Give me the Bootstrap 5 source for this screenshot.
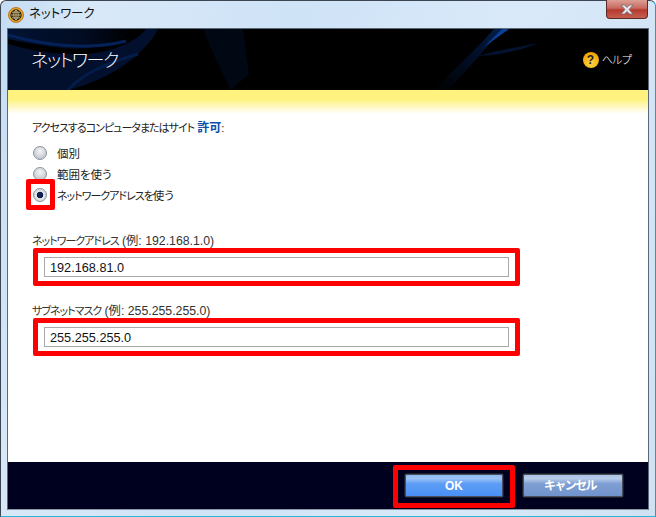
<!DOCTYPE html>
<html lang="ja">
<head>
<meta charset="utf-8">
<title>ネットワーク</title>
<link href="https://cdn.jsdelivr.net/npm/bootstrap@5.3.0/dist/css/bootstrap.min.css" rel="stylesheet">
<style>
html,body{margin:0;height:517px;overflow:hidden;background:#fff}
body{font-family:"Liberation Sans","Noto Sans CJK JP",sans-serif;font-size:11.5px;color:#222;font-feature-settings:"palt"}
.aero{height:517px;padding:0 6px 6px 6px;border:1px solid #3c4652;border-bottom-color:#2bb5d8;border-right-color:#1b9fd0;border-radius:6px 6px 0 0;background:linear-gradient(100deg,#c4dcf4 0,#d8e8f8 12%,#cfe3f7 40%,#d9e9f9 70%,#cfe2f3 100%)}
.tbar{height:27px;position:relative}
.globe{margin-left:1px;margin-right:5px}
.tbar-text{font-size:12.5px;color:#111;line-height:1;letter-spacing:-.1px}
.closex{width:42px;height:19px;margin-top:-1px;margin-right:1px;background:linear-gradient(#dba097 0,#c9695f 45%,#b53a2e 55%,#c65f50 100%);border:1px solid #5b2a26;border-top:0;border-radius:0 0 4px 4px}
.pane{border:1px solid #5c6875;border-bottom-color:#8a96a3;height:482px;background:#fff;position:relative}
.pane-head{height:61px;background:#000;position:relative;overflow:hidden;color:#fff}
.art{position:absolute;left:0;top:0}
.pane-title{position:relative;margin-left:23px;padding-top:3px;font-size:18px;font-weight:300;letter-spacing:-1.4px;line-height:1}
.helpbox{position:relative;margin-right:17px;gap:3px}
.help-txt{font-size:11px;font-weight:300;letter-spacing:-.7px;padding-top:1px}
.helpdot{width:16px;height:16px;border-radius:50%;background:radial-gradient(circle at 50% 70%,#ffd54a,#f0a400 75%,#c98300);color:#222;font-size:12px;font-weight:700;line-height:16px;text-align:center}
.pane-body{height:372px;padding:28px 24px 0;background:linear-gradient(#fff27e 0,#fff27e 9px,#fff 24px)}
.kn{font-size:11px;letter-spacing:-1px}
.lt{font-size:12.3px}
.line-txt{line-height:18px;padding-top:1px;height:18px}
.allow{color:#0b4fa8;font-weight:700;font-size:12px}
.radio-list{margin-top:6px;position:relative}
.radio-row{height:21px;padding-left:1px;min-height:0;margin:0}
.radio-row .form-check-input{appearance:none;float:none;width:14px;height:14px;margin:0 10px 0 0;flex:none;border:1px solid #8b939c;border-radius:50%;background:radial-gradient(circle at 50% 35%,#f4f5f7,#c3c8cf 75%);box-shadow:none}
.radio-row .form-check-input:checked{background:radial-gradient(circle,#14224f 0,#14224f 3px,#e6e8ec 3.6px,#c3c8cf 100%);border-color:#8b939c}
.radio-row .form-check-label{line-height:21px;padding-top:4px;color:#222;opacity:1}
.radio-mark{position:absolute;left:-6px;top:37px;width:29px;height:31px;border:5px solid #f00;border-radius:2px;pointer-events:none}
.field-label{display:block;margin:0;height:18px;padding-top:2px;line-height:18px;color:#333}
.first-label{margin-top:25px}
.next-label{margin-top:14px}
.red-wrap{width:487px;margin-left:1px;padding:4px 6px;border:5px solid #f00;border-radius:2px}
.red-wrap .form-control{height:20px;min-height:0;padding:1px 5px 0;border:1px solid #aaa;border-radius:0;font-size:12.7px;line-height:17px;color:#111;box-shadow:none}
.pane-foot{height:47px;background:#00001f;padding:11px 24px 0 0;gap:18px;position:relative}
.foot-btn{height:25px;padding:0;border:1px solid #1c1f2a;outline:1px solid #4a4e5c;outline-offset:-2px;border-radius:3px;font-size:12px;font-weight:700;color:#fff;line-height:22px}
.ok-btn{width:100px;background:linear-gradient(#8ab6f2 0,#9cc2f5 20%,#5f9df5 42%,#468ff5 100%)}
.cancel-btn{width:102px;padding-right:6px;background:linear-gradient(#a9c0e2 0,#b7cbe8 20%,#7f9fd3 42%,#6f93cc 100%);letter-spacing:-1.6px}
.ok-mark{position:absolute;left:-11px;top:-8px;width:122px;height:43px;border:5px solid #f00;border-radius:2px;pointer-events:none}
.ok-holder{position:relative}
</style>
</head>
<body>
<div class="aero">
  <div class="tbar d-flex align-items-center">
    <svg width="16" height="16" viewBox="0 0 16 16" class="globe flex-shrink-0"><circle cx="8" cy="8" r="7.500" fill="#eda52e" stroke="#b87a18"/><circle cx="8" cy="8" r="5.200" fill="#3f3820" stroke="#2a2410"/><path d="M3 8h10M8 3v10M4 5.200h8M4 10.800h8M8 3c-3 2.500-3 7.500 0 10M8 3c3 2.500 3 7.500 0 10" fill="none" stroke="#d8c890" stroke-width=".7"/></svg>
    <span class="tbar-text">ネットワーク</span>
    <div class="closex ms-auto d-flex align-items-center justify-content-center align-self-start">
      <svg width="16" height="11" viewBox="0 0 16 11"><path d="M2 1h3.500l2.500 2.500 2.500-2.500H14l-4 4.500 4 4.500h-3.500L8 7.500 5.500 10H2l4-4.500z" fill="#e8e8ec" stroke="#6b6f78" stroke-width=".8"/></svg>
    </div>
  </div>
  <div class="pane">
    <div class="pane-head d-flex align-items-center justify-content-between">
      <svg class="art" width="640" height="61" viewBox="0 0 640 61">
        <defs>
          <linearGradient id="sw" x1="0" y1="0" x2="1" y2="0"><stop offset="0" stop-color="#031f55"/><stop offset=".6" stop-color="#02143a"/><stop offset="1" stop-color="#000"/></linearGradient>
          <linearGradient id="sk" x1="0" y1="1" x2="1" y2="0"><stop offset="0" stop-color="#000"/><stop offset=".7" stop-color="#021a48"/><stop offset="1" stop-color="#05306f"/></linearGradient>
        </defs>
        <path d="M0 0H125C115 14 85 22 55 19 35 17 15 13 0 10Z" fill="url(#sw)" opacity=".6"/>
        <path d="M0 15C30 24 75 30 105 20 122 14 132 8 138 0H150C138 24 105 50 60 61H0Z" fill="#021232" opacity=".9"/>
        <path d="M0 6C35 16 80 22 118 12" fill="none" stroke="#042259" stroke-width="3"/>
        <path d="M60 61C75 44 100 34 130 25" fill="none" stroke="#031c4a" stroke-width="3"/>
        <path d="M195 0h40l6 45-18 16c-10-20-20-40-28-61Z" fill="#030a1c" opacity=".7"/>
        <path d="M425 61C445 42 470 18 486 0h8C478 20 458 42 440 61Z" fill="url(#sk)" opacity=".65"/>
        <path d="M476 18 501 0h-7z" fill="#0a3f9a"/>
        <path d="M470 27c20-6 40-9 60-13-15 7-38 12-60 13Z" fill="#02122f"/>
      </svg>
      <div class="pane-title">ネットワーク</div>
      <div class="helpbox d-flex align-items-center">
        <div class="helpdot">?</div><span class="help-txt">ヘルプ</span>
      </div>
    </div>
    <div class="pane-body">
      <div class="line-txt"><span class="kn">アクセスするコンピュータまたはサイト</span> <span class="allow">許可</span>:</div>
      <div class="radio-list">
        <div class="form-check radio-row d-flex align-items-center"><input class="form-check-input" type="radio" name="r" id="r1"><label class="form-check-label" for="r1">個別</label></div>
        <div class="form-check radio-row d-flex align-items-center"><input class="form-check-input" type="radio" name="r" id="r2"><label class="form-check-label" for="r2">範囲を使う</label></div>
        <div class="form-check radio-row d-flex align-items-center"><input class="form-check-input" type="radio" name="r" id="r3" checked><label class="form-check-label" for="r3"><span class="kn">ネットワークアドレスを</span>使う</label></div>
        <div class="radio-mark"></div>
      </div>
      <label class="field-label first-label" for="a1"><span class="kn">ネットワークアドレス</span> <span class="lt">(例: 192.168.1.0)</span></label>
      <div class="red-wrap"><input class="form-control" id="a1" type="text" value="192.168.81.0"></div>
      <label class="field-label next-label" for="a2"><span class="kn">サブネットマスク</span> <span class="lt">(例: 255.255.255.0)</span></label>
      <div class="red-wrap"><input class="form-control" id="a2" type="text" value="255.255.255.0"></div>
    </div>
    <div class="pane-foot d-flex justify-content-end align-items-start">
      <div class="ok-holder">
        <button type="button" class="btn foot-btn ok-btn d-block">OK</button>
        <div class="ok-mark"></div>
      </div>
      <button type="button" class="btn foot-btn cancel-btn">キャンセル</button>
    </div>
  </div>
</div>
</body>
</html>
